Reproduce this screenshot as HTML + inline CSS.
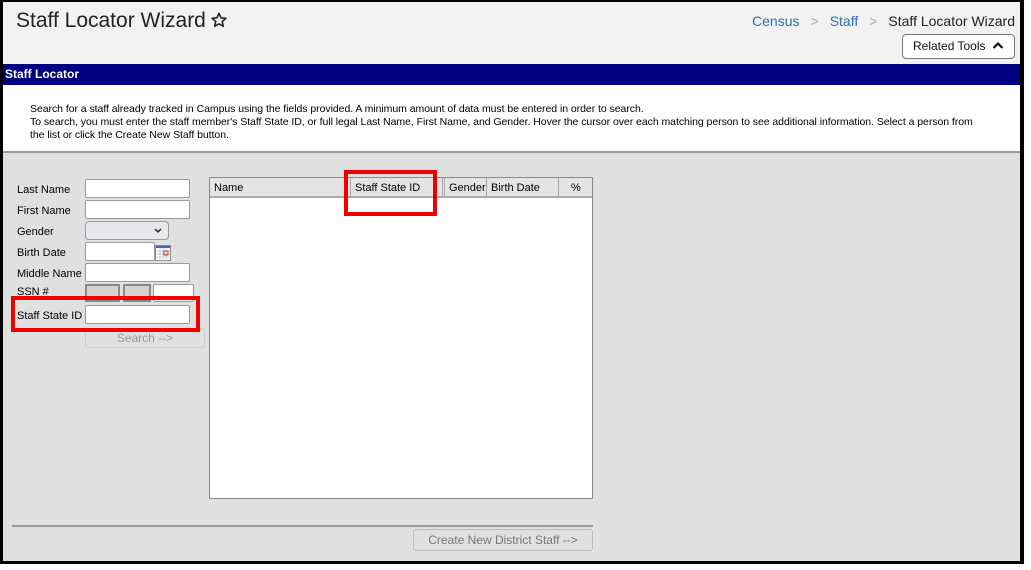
<!DOCTYPE html>
<html><head><style>
*{box-sizing:border-box;margin:0;padding:0}
body{width:1031px;height:570px;background:#fff;position:relative;overflow:hidden;font-family:"Liberation Sans",Arial,sans-serif}
.a{position:absolute}
.frame{left:0;top:0;width:1024px;height:564px;border:3px solid #000;border-right-width:4px;border-top-width:2px;background:#e0e0e0;overflow:hidden}
.lbl{font-size:11px;color:#000;left:17px}
.inp{background:#fff;border:1px solid #999;border-radius:2px}
.th{font-size:11px;top:0;height:20px;line-height:21px;border-right:1px solid #aaa;padding-left:4px}
</style></head><body>
<div class="a frame">
 <div class="a" style="left:0;top:0;width:1020px;height:62px;background:#f2f2f2"></div>
 <div class="a" style="left:13px;top:7px;font-size:21px;color:#222">Staff Locator Wizard</div>
 <svg class="a" style="left:206px;top:9px" width="20" height="19" viewBox="0 0 24 24"><path d="M12 3l2.6 5.6 6.1.6-4.6 4.1 1.3 6-5.4-3.1-5.4 3.1 1.3-6-4.6-4.1 6.1-.6z" fill="none" stroke="#222" stroke-width="2" stroke-linejoin="round"/></svg>
 <div class="a" style="right:5px;top:11px;font-size:14px;color:#222;white-space:nowrap"><span style="color:#2a6fb5">Census</span><span style="color:#aaa;margin:0 11px">&gt;</span><span style="color:#2a6fb5">Staff</span><span style="color:#aaa;margin:0 11px">&gt;</span>Staff Locator Wizard</div>
 <div class="a" style="left:899px;top:32px;width:113px;height:25px;border:1px solid #777;border-radius:4px;background:#fff;font-size:12px;line-height:23px;padding-left:10px;color:#111">Related Tools <svg width="12" height="9" viewBox="0 0 12 9" style="margin-left:3px"><path d="M1.5 7L6 2.5 10.5 7" fill="none" stroke="#111" stroke-width="2.2"/></svg></div>
 <div class="a" style="left:0;top:62px;width:1020px;height:21px;background:#000080;color:#fff;font-size:12px;font-weight:bold;line-height:21px;padding-left:2px">Staff Locator</div>
 <div class="a" style="left:0;top:83px;width:1020px;height:68px;background:#fff;border-bottom:2px solid #999"></div>
 <div class="a" style="left:27px;top:101px;font-size:10.5px;line-height:13px;color:#000;width:950px;letter-spacing:-0.05px">Search for a staff already tracked in Campus using the fields provided. A minimum amount of data must be entered in order to search.<br>To search, you must enter the staff member's Staff State ID, or full legal Last Name, First Name, and Gender. Hover the cursor over each matching person to see additional information. Select a person from the list or click the Create New Staff button.</div>

 <div class="a lbl" style="left:14px;top:182px">Last Name</div>
 <div class="a lbl" style="left:14px;top:203px">First Name</div>
 <div class="a lbl" style="left:14px;top:224px">Gender</div>
 <div class="a lbl" style="left:14px;top:245px">Birth Date</div>
 <div class="a lbl" style="left:14px;top:266px">Middle Name</div>
 <div class="a lbl" style="left:14px;top:284px">SSN #</div>
 <div class="a lbl" style="left:14px;top:308px">Staff State ID</div>
 <div class="a inp" style="left:82px;top:177px;width:105px;height:19px"></div>
 <div class="a inp" style="left:82px;top:198px;width:105px;height:19px"></div>
 <div class="a inp" style="left:82px;top:219px;width:84px;height:19px;background:#e8e8ec;border-radius:4px"><svg class="a" style="left:68px;top:6px" width="8" height="6"><path d="M1 1l3 3 3-3" fill="none" stroke="#222" stroke-width="1.5"/></svg></div>
 <div class="a inp" style="left:82px;top:240px;width:70px;height:19px"></div>
 <svg class="a" style="left:152px;top:243px" width="16" height="16"><rect x="0.5" y="0.5" width="15" height="15" fill="#fff" stroke="#888"/><rect x="1" y="1" width="14" height="2" fill="#4a5fb0"/><path d="M1 6h14M1 9h14M1 12h14M5 3v13M8 3v13M11 3v13" stroke="#ccc"/><rect x="9" y="6" width="4" height="4" fill="none" stroke="#b33"/></svg>
 <div class="a inp" style="left:82px;top:261px;width:105px;height:19px"></div>
 <div class="a" style="left:82px;top:282px;width:35px;height:18px;background:#d6d3ce;border:2px solid #888"></div>
 <div class="a" style="left:120px;top:282px;width:28px;height:18px;background:#d6d3ce;border:2px solid #888"></div>
 <div class="a inp" style="left:150px;top:282px;width:41px;height:18px"></div>
 <div class="a inp" style="left:82px;top:303px;width:105px;height:19px"></div>
 <div class="a" style="left:82px;top:326px;width:120px;height:20px;border:1px solid #ccc;border-radius:3px;font-size:12px;color:#999;text-align:center;line-height:19px">Search --&gt;</div>
 <div class="a" style="left:8px;top:294px;width:189px;height:36px;border:4px solid #e00"></div>

 <div class="a" style="left:206px;top:175px;width:384px;height:322px;background:#fff;border:1px solid #888">
  <div class="a" style="left:0;top:0;width:382px;height:20px;background:#e4e4e4;border-bottom:2px solid #aaa"></div>
  <div class="a th" style="left:0;width:136px">Name</div>
  <div class="a th" style="left:140px;width:93px;border-left:1px solid #aaa">Staff State ID</div>
  <div class="a th" style="left:234px;width:43px;border-left:1px solid #aaa">Gender</div>
  <div class="a th" style="left:277px;width:72px">Birth Date</div>
  <div class="a th" style="left:349px;width:33px;border-right:none;padding-left:12px">%</div>
 </div>
 <div class="a" style="left:341px;top:168px;width:93px;height:46px;border:4px solid #e00"></div>

 <div class="a" style="left:9px;top:523px;width:581px;height:2px;background:#999"></div>
 <div class="a" style="left:410px;top:527px;width:180px;height:22px;border:1px solid #bbb;border-radius:3px;font-size:12px;color:#777;text-align:center;line-height:21px">Create New District Staff --&gt;</div>
</div>
</body></html>
